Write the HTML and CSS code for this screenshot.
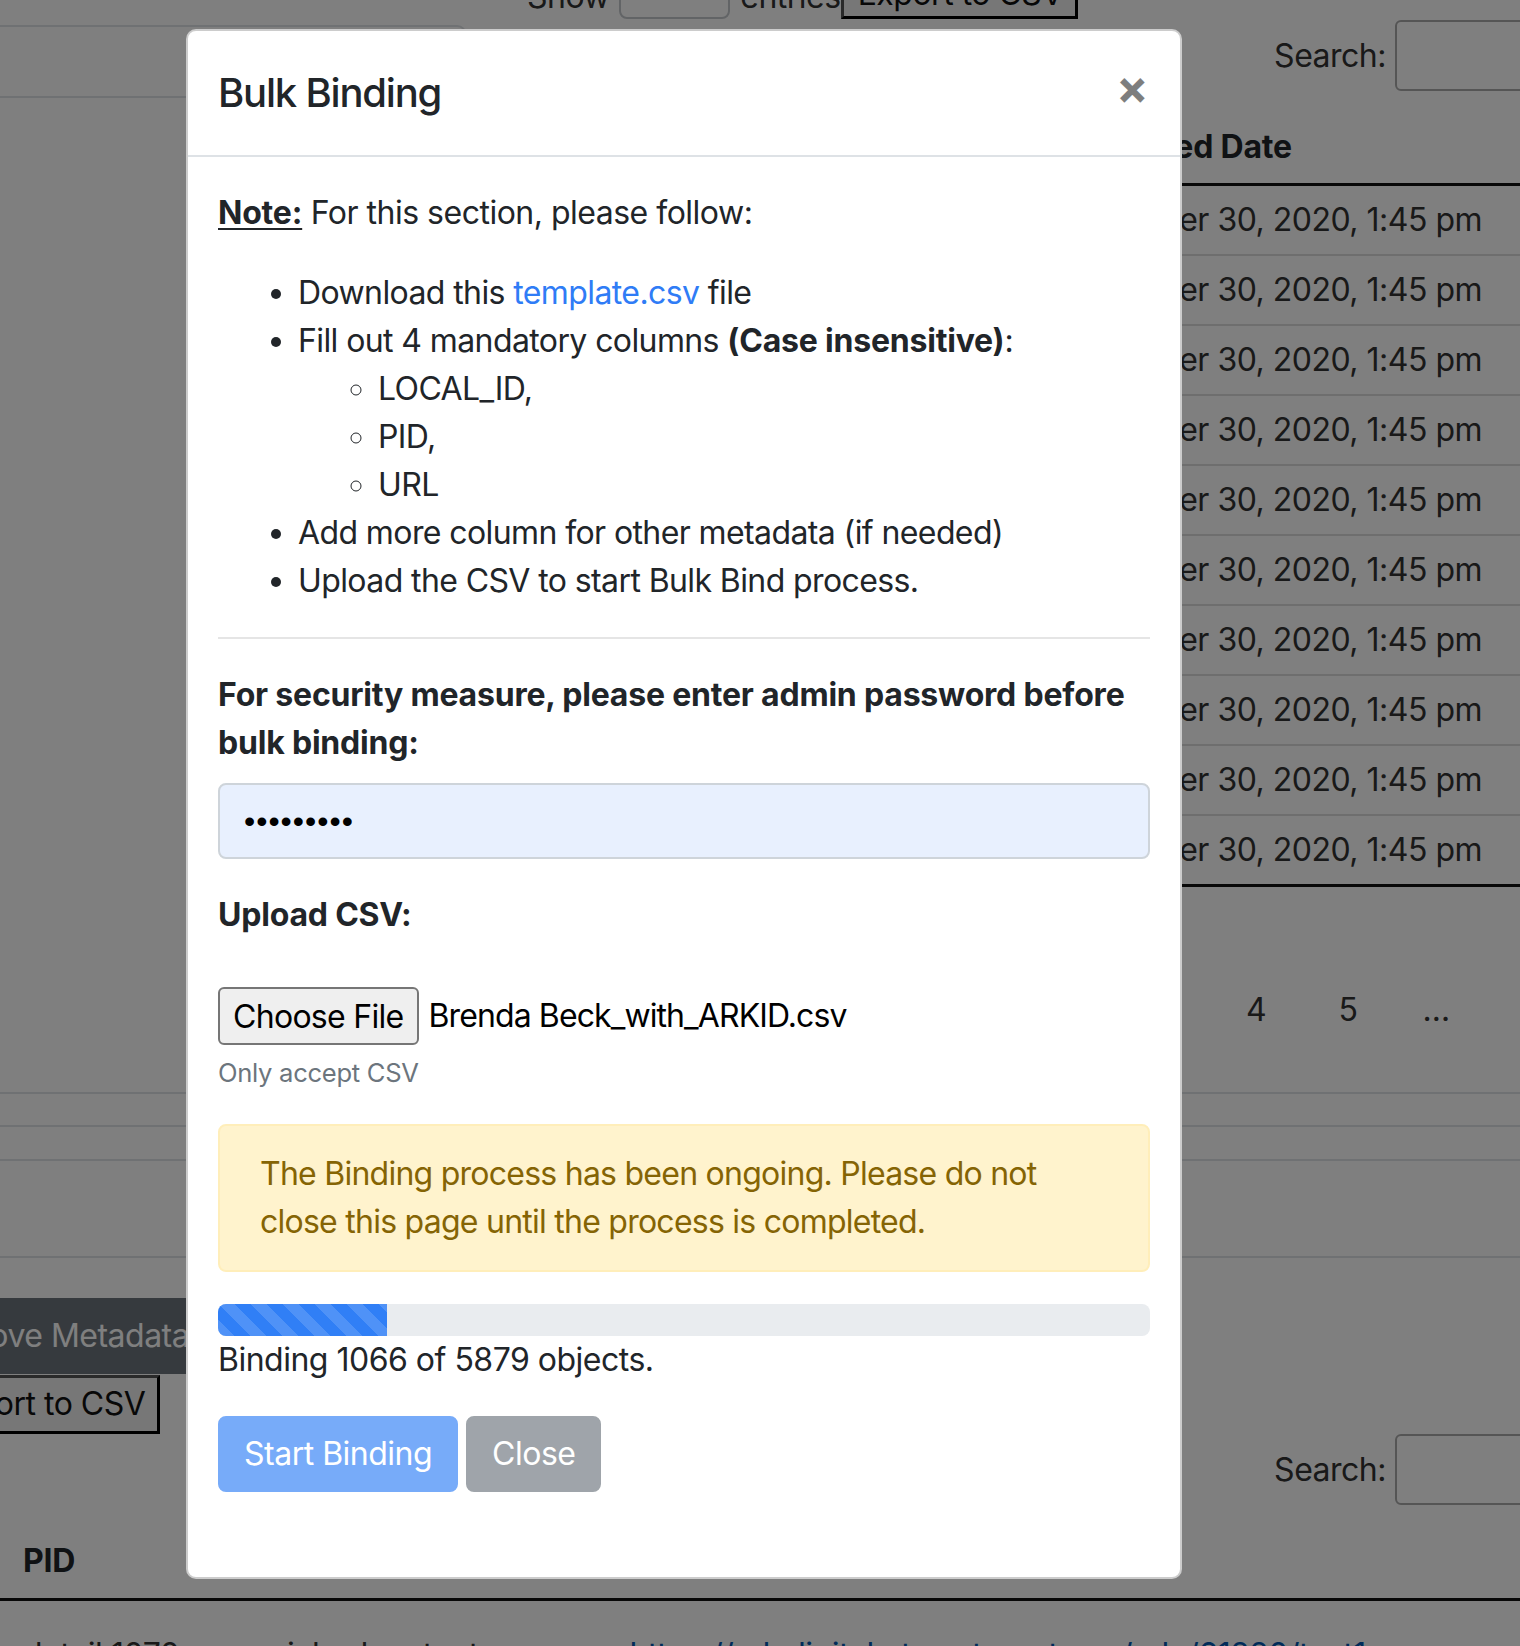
FILE: index.html
```html
<!DOCTYPE html>
<html lang="en">
<head>
<meta charset="utf-8">
<title>Bulk Binding</title>
<link rel="stylesheet" href="styles.css">
</head>
<body>
<div class="page">
  <div class="toolbar">
    <span class="tb-text">Show</span>
    <span class="select-box">10</span>
    <span class="tb-text">entries</span>
    <button class="plain-btn export-top">Export to CSV</button>
  </div>

  <div class="top-row">
    <div class="nav"><div class="nav-tab">Objects</div></div>
    <div class="search"><span class="search-label">Search:</span><span class="search-input"></span></div>
  </div>

  <div class="dt-wrap">
    <table class="dt">
      <thead><tr><th class="c1">Title</th><th class="c2">Created Date</th></tr></thead>
      <tbody>
        <tr><td class="c1">Object 1</td><td class="c2">October 30, 2020, 1:45 pm</td></tr>
        <tr><td class="c1">Object 2</td><td class="c2">October 30, 2020, 1:45 pm</td></tr>
        <tr><td class="c1">Object 3</td><td class="c2">October 30, 2020, 1:45 pm</td></tr>
        <tr><td class="c1">Object 4</td><td class="c2">October 30, 2020, 1:45 pm</td></tr>
        <tr><td class="c1">Object 5</td><td class="c2">October 30, 2020, 1:45 pm</td></tr>
        <tr><td class="c1">Object 6</td><td class="c2">October 30, 2020, 1:45 pm</td></tr>
        <tr><td class="c1">Object 7</td><td class="c2">October 30, 2020, 1:45 pm</td></tr>
        <tr><td class="c1">Object 8</td><td class="c2">October 30, 2020, 1:45 pm</td></tr>
        <tr><td class="c1">Object 9</td><td class="c2">October 30, 2020, 1:45 pm</td></tr>
        <tr><td class="c1">Object 10</td><td class="c2">October 30, 2020, 1:45 pm</td></tr>
      </tbody>
    </table>
  </div>

  <div class="pager">
    <span class="pg">1</span><span class="pg">2</span><span class="pg">3</span><span class="pg">4</span><span class="pg">5</span><span class="pg pg-ell">…</span>
  </div>

  <div class="rules">
    <div class="rule r1"></div>
    <div class="rule r2"></div>
    <div class="rule r3"></div>
    <div class="rule r4"></div>
  </div>

  <div class="left-actions">
    <button class="sec-btn">Remove Metadata</button>
    <button class="plain-btn export-bottom">Export to CSV</button>
  </div>

  <div class="search-row">
    <div class="search"><span class="search-label">Search:</span><span class="search-input"></span></div>
  </div>

  <table class="dt2">
    <thead><tr><th class="pid">PID</th><th class="sortcol"><span class="sort-ico"></span></th><th>URL</th></tr></thead>
    <tbody>
      <tr><td class="pid">detail:1070</td><td>enrichedcontent</td><td><a class="bg-link" href="#">https://adsdigital.utsc.utoronto.ca/ark:/61220/test1</a></td></tr>
    </tbody>
  </table>
</div>

<div class="backdrop"></div>

<div class="modal">
  <div class="modal-dialog">
    <div class="modal-content">
      <div class="modal-header">
        <h5 class="modal-title">Bulk Binding</h5>
        <button class="close" type="button">×</button>
      </div>
      <div class="modal-body">
        <p class="note"><u class="note-label">Note:</u> For this section, please follow:</p>
        <ul class="steps">
          <li>Download this <a class="link" href="#">template.csv</a> file</li>
          <li>Fill out 4 mandatory columns <b>(Case insensitive)</b>:
            <ul class="sub">
              <li>LOCAL_ID,</li>
              <li>PID,</li>
              <li>URL</li>
            </ul>
          </li>
          <li>Add more column for other metadata (if needed)</li>
          <li>Upload the CSV to start Bulk Bind process.</li>
        </ul>
        <hr class="sep">
        <div class="form-group">
          <label class="lbl">For security measure, please enter admin password before bulk binding:</label>
          <input class="form-control" type="password" value="adminpass">
        </div>
        <div class="form-group">
          <label class="lbl upload-lbl">Upload CSV:</label>
          <div class="file-row"><span class="file-btn">Choose File</span><span class="file-name">Brenda Beck_with_ARKID.csv</span></div>
          <small class="help">Only accept CSV</small>
        </div>
        <div class="alert">The Binding process has been ongoing. Please do not close this page until the process is completed.</div>
        <div class="progress"><div class="progress-bar" style="width:18.13%"></div></div>
        <p class="status">Binding 1066 of 5879 objects.</p>
        <div class="actions">
          <button class="btn btn-primary" type="button" disabled>Start Binding</button>
          <button class="btn btn-secondary" type="button" disabled>Close</button>
        </div>
      </div>
    </div>
  </div>
</div>
</body>
</html>
```

FILE: styles.css
```css
* { box-sizing: border-box; }

html, body {
  margin: 0;
  width: 1520px;
  height: 1646px;
  overflow: hidden;
}

body {
  font-family: "Inter", "Liberation Sans", Arial, sans-serif;
  font-size: 32px;
  line-height: 48px;
  letter-spacing: -0.5px;
  color: #212529;
  background: #fff;
  position: relative;
}

button { font-family: inherit; letter-spacing: inherit; }
b, th, .lbl, .note-label { letter-spacing: -0.2px; }

/* ---------- background page ---------- */
.page { width: 1520px; }

.toolbar {
  display: flex;
  align-items: flex-end;
  height: 76px;
  margin-top: -57px;
  padding-left: 527px;
}
.tb-text { margin-bottom: -2px; color: #333; }
.select-box {
  width: 111px;
  height: 76px;
  margin: 0 10px;
  border: 2px solid #c4c8cc;
  border-radius: 8px;
  padding: 12px 24px;
}
.plain-btn {
  font-size: 32px;
  line-height: 48px;
  color: #111;
  background: #efefef;
  border: 3px solid #000;
  border-top-color: #555;
  border-left-color: #555;
  border-radius: 0;
  padding: 2px 12px 3px 14px;
}
.export-top { margin-left: 0; padding-top: 0; padding-bottom: 0; height: 50px; line-height: 38px; }

.top-row {
  display: flex;
  justify-content: space-between;
  height: 79px;
}
.nav {
  width: 760px;
  margin-left: -40px;
  border-bottom: 2px solid #dee2e6;
  display: flex;
  align-items: flex-end;
}
.nav-tab {
  width: 507px;
  height: 71px;
  border: 2px solid #dee2e6;
  border-bottom: 0;
  border-radius: 0 10px 0 0;
  background: #fff;
  padding: 10px 32px 10px 270px;
  color: #495057;
}
.search {
  display: flex;
  align-items: center;
  gap: 9px;
  height: 71px;
  margin-top: 1px;
  margin-right: -75px;
}
.search-label { color: #333; }
.search-input {
  width: 200px;
  height: 71px;
  border: 2px solid #aaa;
  border-radius: 6px;
}

.dt-wrap { margin-left: 700px; width: 820px; }
.dt { border-collapse: collapse; width: 100%; }
.dt th {
  text-align: left;
  font-weight: 700;
  padding: 25px 36px 12px;
  border-bottom: 3px solid #111;
  white-space: nowrap;
}
.dt td {
  padding: 10px 36px;
  border-bottom: 2px solid #ddd;
  white-space: nowrap;
  color: #333;
}
.dt tr:last-child td { border-bottom: 3px solid #111; }
.dt .c1 { width: 354px; }

.pager {
  display: flex;
  height: 205px;
  padding: 99px 0 0 934px;
}
.pg {
  width: 92px;
  height: 48px;
  text-align: center;
  color: #333;
}
.pg-ell { width: 84px; }

.rule { border-top: 2px solid #dee2e6; }
.r1 { height: 33px; }
.r2 { height: 34px; }
.r3 { height: 97px; }
.r4 { height: 42px; }

.left-actions {
  display: flex;
  flex-direction: column;
  align-items: flex-start;
  gap: 1px;
}
.sec-btn {
  font-size: 32px;
  line-height: 48px;
  height: 76px;
  padding: 12px 24px;
  color: #fff;
  background: #6c757d;
  border: 2px solid #6c757d;
  border-radius: 0;
  margin-left: -102px;
}
.export-bottom { height: 59px; margin-left: -77px; }

.search-row {
  display: flex;
  justify-content: flex-end;
  height: 71px;
}
.search-row .search { margin-top: 0; }

.dt2 { border-collapse: collapse; width: 1700px; }
.dt2 th {
  text-align: left;
  font-weight: 700;
  padding: 32px 36px 13px 23px;
  border-bottom: 3px solid #111;
  white-space: nowrap;
}
.dt2 td {
  padding: 30px 36px 10px 23px;
  white-space: nowrap;
  color: #333;
}
.dt2 .pid { width: 140px; }
.dt2 .sortcol { width: 391px; }
.sort-ico {
  display: inline-block;
  width: 0;
  height: 0;
  border-left: 10px solid transparent;
  border-right: 10px solid transparent;
  border-bottom: 14px solid #bbb;
}
.bg-link { color: #0056b3; text-decoration: none; }

/* ---------- overlay ---------- */
.backdrop {
  position: absolute;
  inset: 0;
  background: rgba(0, 0, 0, 0.5);
}

/* ---------- modal ---------- */
.modal {
  position: absolute;
  top: 0;
  left: 0;
  width: 1520px;
}
.modal-dialog {
  width: 996px;
  margin: 29px 0 0 186px;
}
.modal-content {
  background: #fff;
  border: 2px solid rgba(0, 0, 0, 0.2);
  border-radius: 10px;
}
.modal-header {
  display: flex;
  align-items: flex-start;
  justify-content: space-between;
  padding: 32px 30px;
  border-bottom: 2px solid #dee2e6;
}
.modal-title {
  margin: 0;
  font-size: 40px;
  line-height: 60px;
  font-weight: 500;
  letter-spacing: -1.2px;
}
.close {
  font-size: 48px;
  font-weight: 700;
  line-height: 48px;
  color: #000;
  opacity: 0.5;
  background: transparent;
  border: 0;
  padding: 32px;
  margin: -32px -30px -32px auto;
}

.modal-body { padding: 32px 30px 32px; }

.note { margin: 0 0 32px; }
.note-label {
  font-weight: 700;
  text-decoration-thickness: 2px;
  text-underline-offset: 4px;
}
.steps { margin: 0 0 32px; padding-left: 80px; letter-spacing: -0.6px; }
.steps li::marker { font-family: "DejaVu Sans", sans-serif; }
.sub { margin: 0; padding-left: 80px; list-style-type: circle; }
.link { color: #2f7cf6; text-decoration: none; }

.sep {
  margin: 32px 0;
  border: 0;
  border-top: 2px solid rgba(0, 0, 0, 0.1);
}

.form-group { margin-bottom: 32px; }
.lbl { display: block; font-weight: 700; margin-bottom: 16px; }
.upload-lbl { margin-bottom: 48px; }

.form-control {
  display: block;
  width: 100%;
  height: 76px;
  padding: 12px 24px;
  font-family: "Liberation Sans", Arial, sans-serif;
  font-size: 32px;
  line-height: 48px;
  color: #000;
  background: #e8f0fe;
  border: 2px solid #ced4da;
  border-radius: 8px;
  letter-spacing: 1px;
}

.file-row { display: flex; align-items: center; height: 58px; }
.file-btn {
  height: 58px;
  padding: 4px 13px;
  border: 2px solid #767676;
  border-radius: 6px;
  background: #efefef;
  color: #000;
  line-height: 48px;
  letter-spacing: -0.7px;
}
.file-name { margin-left: 10px; color: #000; letter-spacing: -0.9px; }

.help {
  display: block;
  margin-top: 9px;
  font-size: 25.6px;
  line-height: 38.4px;
  letter-spacing: -0.3px;
  color: #6c757d;
}

.alert {
  padding: 24px 40px;
  margin-bottom: 32px;
  color: #856404;
  background: #fff3cd;
  border: 2px solid #ffeeba;
  border-radius: 8px;
  letter-spacing: -0.75px;
}

.progress {
  display: flex;
  height: 32px;
  overflow: hidden;
  background: #e9ecef;
  border-radius: 8px;
}
.progress-bar {
  background-color: #307ff6;
  background-image: linear-gradient(45deg, rgba(255,255,255,.15) 25%, transparent 25%, transparent 50%, rgba(255,255,255,.15) 50%, rgba(255,255,255,.15) 75%, transparent 75%, transparent);
  background-size: 32px 32px;
}

.status { margin: 0 0 32px; }

.actions { display: flex; gap: 8px; margin-bottom: 53px; }
.btn {
  font-size: 32px;
  line-height: 48px;
  padding: 12px 24px;
  border: 2px solid transparent;
  border-radius: 8px;
  color: #fff;
  opacity: 0.65;
}
.btn-primary { background: #307ff6; border-color: #307ff6; }
.btn-secondary { background: #6c757d; border-color: #6c757d; }
```
